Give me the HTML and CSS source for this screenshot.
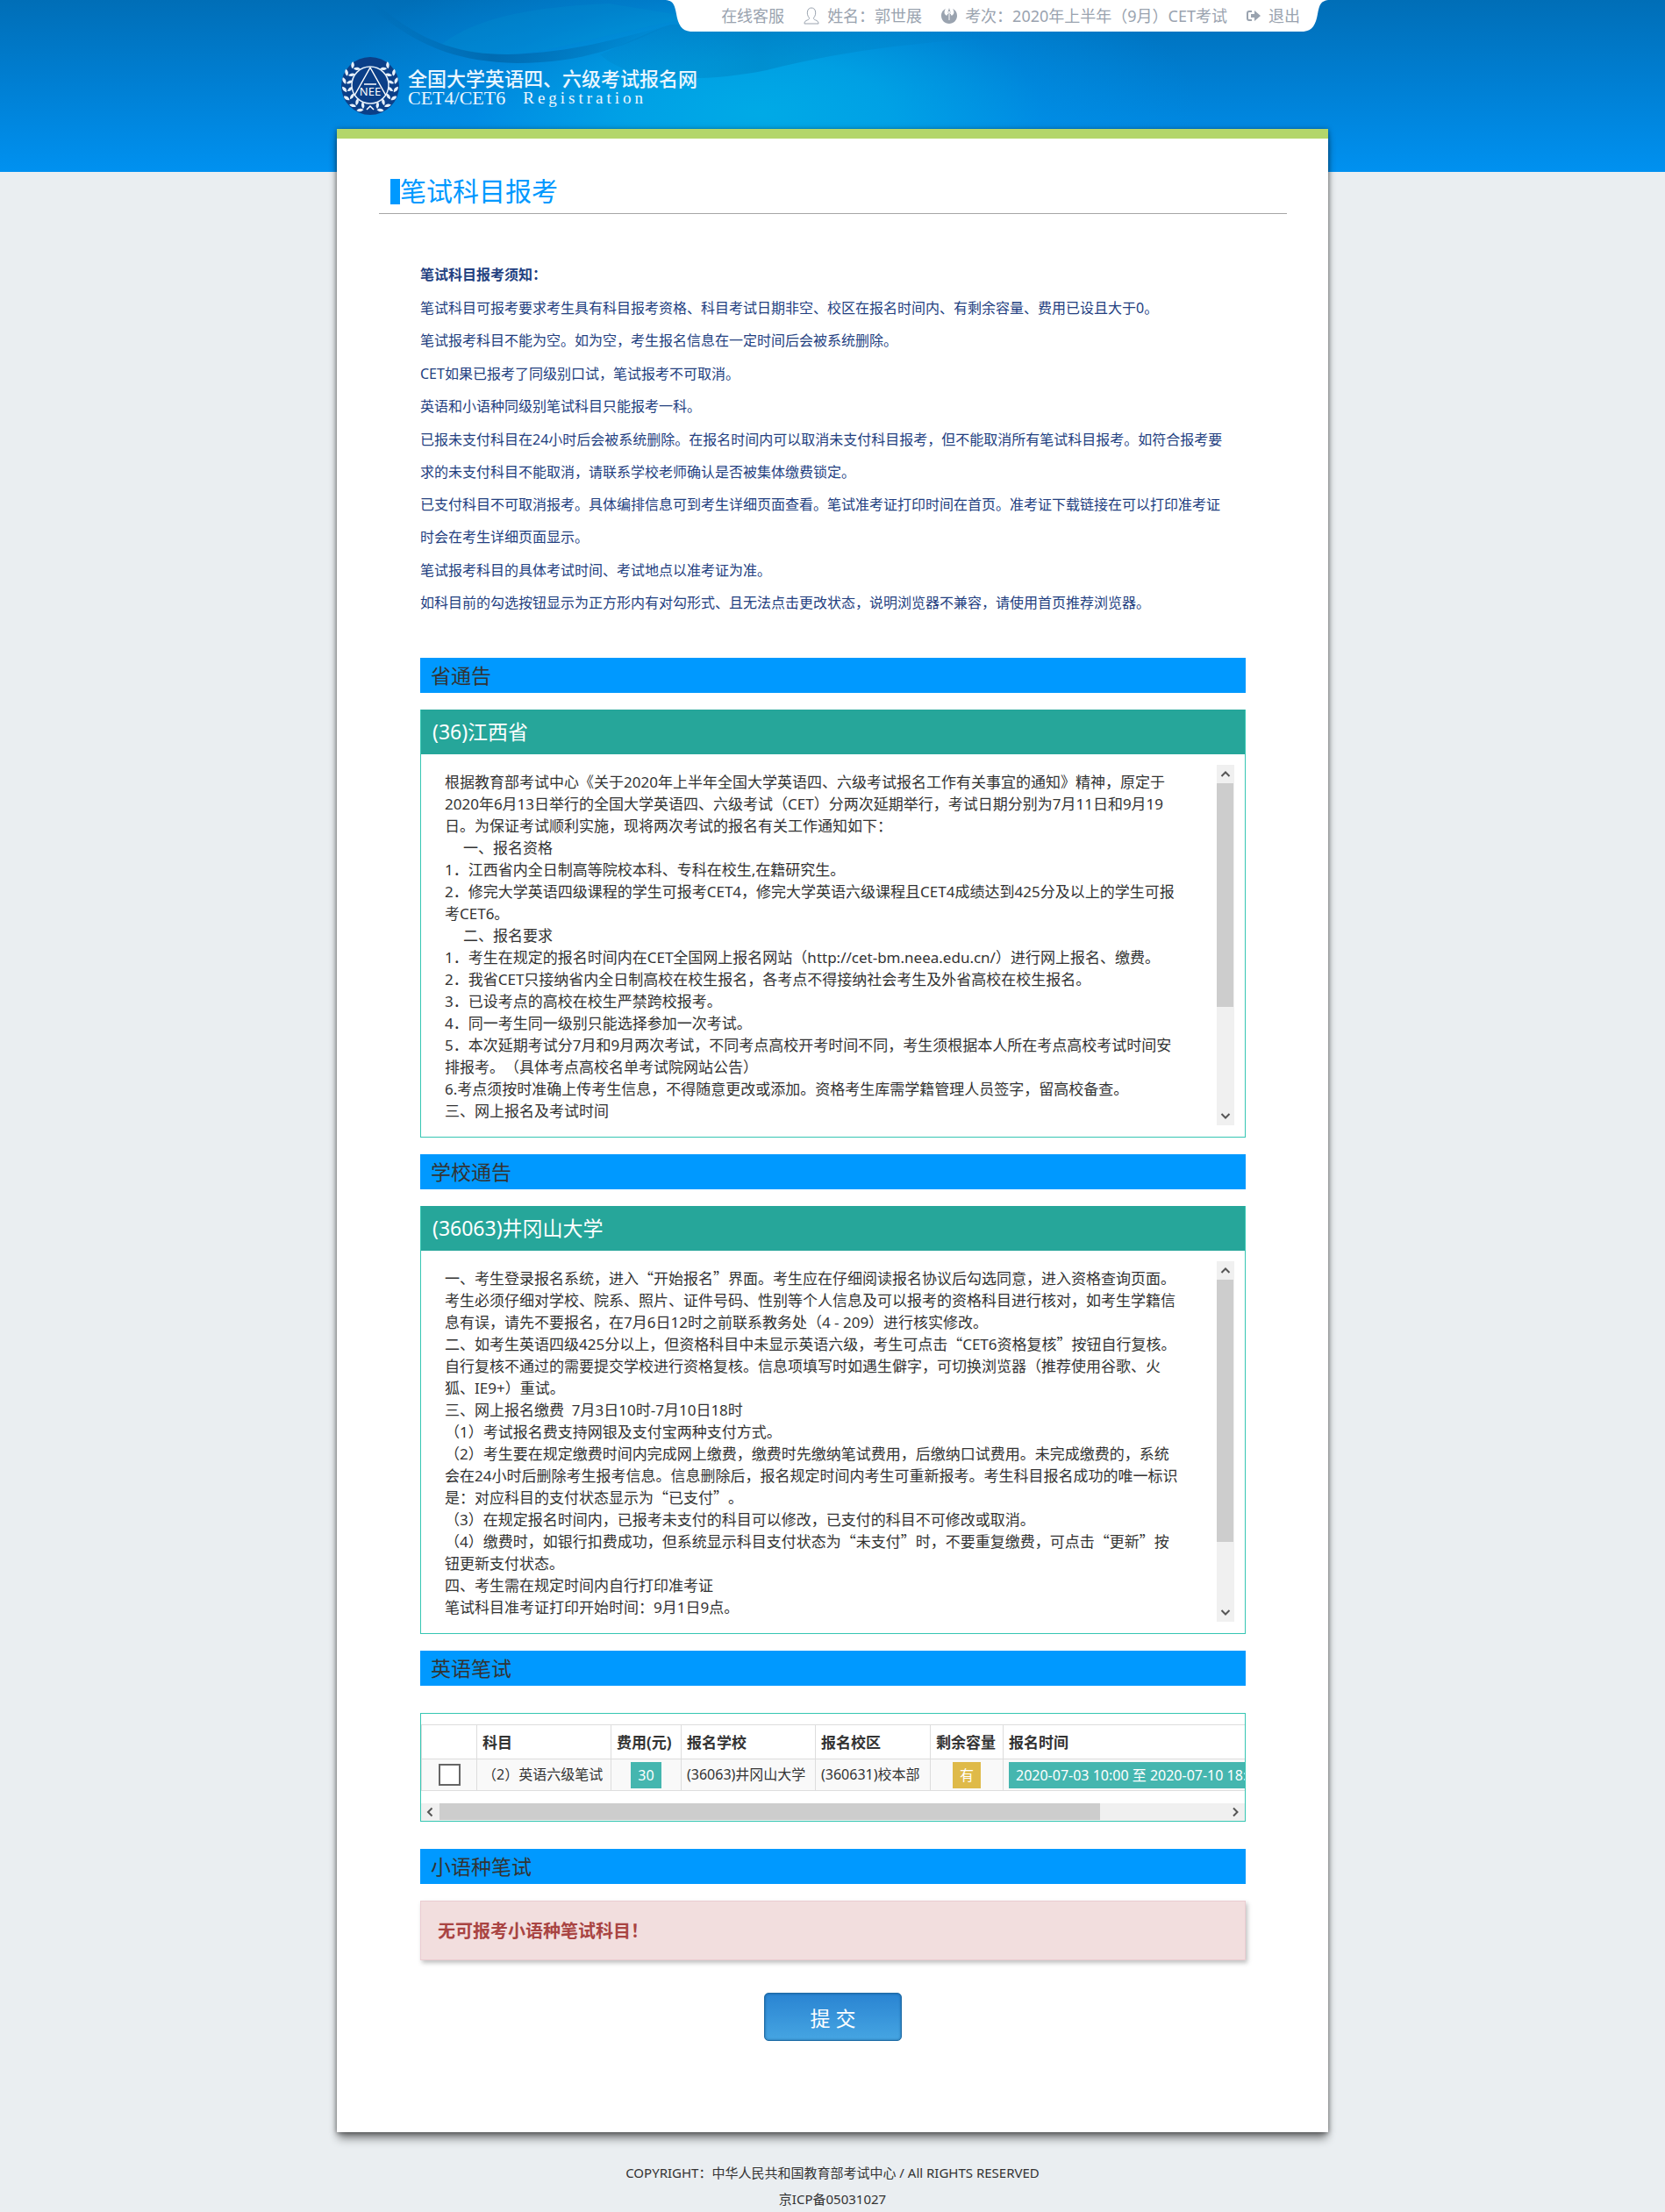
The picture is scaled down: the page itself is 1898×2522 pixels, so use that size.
FILE: index.html
```html
<!DOCTYPE html>
<html lang="zh-CN">
<head>
<meta charset="utf-8">
<meta name="viewport" content="width=device-width, initial-scale=1">
<title>笔试科目报考 - 全国大学英语四、六级考试报名网</title>
<link rel="stylesheet" href="styles.css">
</head>
<body>
<div class="page">
  <header class="site-header">
    <svg class="header-art" viewBox="0 0 1170 147" preserveAspectRatio="none" aria-hidden="true">
      <defs>
        <linearGradient id="swoosh" x1="0" x2="1"><stop offset="0" stop-color="#005f9f" stop-opacity="0"/><stop offset=".4" stop-color="#005f9f" stop-opacity=".65"/><stop offset="1" stop-color="#005f9f" stop-opacity="0"/></linearGradient>
        <linearGradient id="swoosh2" x1="0" x2="1"><stop offset="0" stop-color="#006aa8" stop-opacity=".1"/><stop offset=".4" stop-color="#006aa8" stop-opacity=".32"/><stop offset="1" stop-color="#006aa8" stop-opacity="0"/></linearGradient>
      </defs>
      <path d="M60 0C100 34 140 62 215 62C290 60 340 44 400 28C350 52 300 72 225 72C150 70 110 50 60 10Z" fill="url(#swoosh)"/>
      <path d="M140 50C180 20 240 8 330 4L430 20C330 36 260 62 215 62C180 62 160 58 140 50Z" fill="#0095cf" fill-opacity=".25"/>
      <path d="M320 62C350 92 430 96 510 80C590 60 660 50 760 44L780 20L400 28C370 38 350 50 320 62Z" fill="url(#swoosh2)"/>
    </svg>
    <nav class="user-bar" aria-label="用户菜单">
      <svg class="tab-edge" viewBox="0 0 28 36" aria-hidden="true"><path d="M0 0C8 1 10 5 12 16C14 28 18 35 28 36V0Z" fill="#fff"/></svg>
      <div class="user-menu">
        <a href="#">在线客服</a>
        <span class="menu-item"><svg width="18" height="20" viewBox="0 0 18 20" fill="none" stroke="#9aa3af" aria-hidden="true"><path d="M6.500 12.500C4.500 10 4 7.500 4.500 5C5 2 7 1 9 1C11 1 13 2 13.500 5C14 7.500 13.500 10 11.500 12.500C11.500 14.500 13 14.500 15 15.500C16.500 16.300 17 17.500 17 19H1C1 17.500 1.500 16.300 3 15.500C5 14.500 6.500 14.500 6.500 12.500Z"/></svg>姓名：郭世展</span>
        <span class="menu-item"><svg width="18" height="18" viewBox="0 0 18 18" aria-hidden="true"><path d="M5 1C1 3 0 6 0 9C0 14 4 18 9 18C14 18 18 14 18 9C18 6 17 3 13 1C15 4 15 7 12.500 8.500C11.500 9 10.800 8 10.800 6L9 0L7.200 6C7.200 8 6.500 9 5.500 8.500C3 7 3 4 5 1Z" fill="#9aa3af"/><path d="M9 4V14M7 7L9 4L11 7" stroke="#fff" fill="none"/></svg>考次：2020年上半年（9月）CET考试</span>
        <a href="#" class="menu-item"><svg width="16" height="14" viewBox="0 0 16 14" aria-hidden="true"><path d="M6 2H3Q1 2 1 4V10Q1 12 3 12H6" fill="none" stroke="#9aa3af" stroke-width="2"/><path d="M5 5H9V1L16 7L9 13V9H5Z" fill="#9aa3af"/></svg>退出</a>
      </div>
      <svg class="tab-edge" viewBox="0 0 28 36" aria-hidden="true"><path d="M28 0C20 1 18 5 16 16C14 28 10 35 0 36V0Z" fill="#fff"/></svg>
    </nav>
    <a class="brand" href="#">
      <svg class="brand-mark" viewBox="0 0 66 66" aria-hidden="true">
        <defs><g id="leaf" fill="#e6f0fa"><path d="M0 0C1 -3 4 -5 7 -4C6 -1 3 1 0 0Z"/><path d="M-1 1C-4 0 -6 -3 -5 -6C-2 -5 0 -3 -1 1Z"/></g></defs>
        <circle cx="33" cy="33" r="33" fill="#0b3f88"/>
        <g id="laurel">
          <use href="#leaf" transform="translate(25 59) rotate(-65)"/>
          <use href="#leaf" transform="translate(17 55) rotate(-45)"/>
          <use href="#leaf" transform="translate(10 48) rotate(-25)"/>
          <use href="#leaf" transform="translate(7 39) rotate(-8)"/>
          <use href="#leaf" transform="translate(6 30) rotate(8)"/>
          <use href="#leaf" transform="translate(8 21) rotate(20)"/>
          <use href="#leaf" transform="translate(14 13) rotate(35)"/>
        </g>
        <use href="#laurel" transform="translate(66 0) scale(-1 1)"/>
        <circle cx="33" cy="32" r="21" fill="#0b3f88" stroke="#e6f0fa" stroke-width="1.500"/>
        <path d="M33 12L15 44M33 12L51 44M26 31H40M29 60L33 56L37 60" fill="none" stroke="#fff" stroke-width="1.500"/>
        <text x="33" y="44" text-anchor="middle" class="brand-nee">NEE</text>
      </svg>
      <span class="brand-text">
        <span class="brand-name">全国大学英语四、六级考试报名网</span>
        <span class="brand-sub"><span>CET4/CET6</span><span class="brand-reg">Registration</span></span>
      </span>
    </a>
  </header>

  <main class="card">
    <h1 class="page-title">笔试科目报考</h1>
    <div class="content">
      <section class="notice">
        <p><b>笔试科目报考须知：</b></p>
        <p>笔试科目可报考要求考生具有科目报考资格、科目考试日期非空、校区在报名时间内、有剩余容量、费用已设且大于0。</p>
        <p>笔试报考科目不能为空。如为空，考生报名信息在一定时间后会被系统删除。</p>
        <p>CET如果已报考了同级别口试，笔试报考不可取消。</p>
        <p>英语和小语种同级别笔试科目只能报考一科。</p>
        <p>已报未支付科目在24小时后会被系统删除。在报名时间内可以取消未支付科目报考，但不能取消所有笔试科目报考。如符合报考要<br>求的未支付科目不能取消，请联系学校老师确认是否被集体缴费锁定。</p>
        <p>已支付科目不可取消报考。具体编排信息可到考生详细页面查看。笔试准考证打印时间在首页。准考证下载链接在可以打印准考证<br>时会在考生详细页面显示。</p>
        <p>笔试报考科目的具体考试时间、考试地点以准考证为准。</p>
        <p>如科目前的勾选按钮显示为正方形内有对勾形式、且无法点击更改状态，说明浏览器不兼容，请使用首页推荐浏览器。</p>
      </section>

      <h2 class="section-title">省通告</h2>
      <section class="panel">
        <h3 class="panel-title">(36)江西省</h3>
        <div class="scroll-area">
          <div class="bulletin">
            <p>根据教育部考试中心《关于2020年上半年全国大学英语四、六级考试报名工作有关事宜的通知》精神，原定于<br>2020年6月13日举行的全国大学英语四、六级考试（CET）分两次延期举行，考试日期分别为7月11日和9月19<br>日。为保证考试顺利实施，现将两次考试的报名有关工作通知如下：</p>
            <p class="indent">一、报名资格</p>
            <p>1．江西省内全日制高等院校本科、专科在校生,在籍研究生。</p>
            <p>2．修完大学英语四级课程的学生可报考CET4，修完大学英语六级课程且CET4成绩达到425分及以上的学生可报<br>考CET6。</p>
            <p class="indent">二、报名要求</p>
            <p>1．考生在规定的报名时间内在CET全国网上报名网站（http://cet-bm.neea.edu.cn/）进行网上报名、缴费。</p>
            <p>2．我省CET只接纳省内全日制高校在校生报名，各考点不得接纳社会考生及外省高校在校生报名。</p>
            <p>3．已设考点的高校在校生严禁跨校报考。</p>
            <p>4．同一考生同一级别只能选择参加一次考试。</p>
            <p>5．本次延期考试分7月和9月两次考试，不同考点高校开考时间不同，考生须根据本人所在考点高校考试时间安<br>排报考。（具体考点高校名单考试院网站公告）</p>
            <p>6.考点须按时准确上传考生信息，不得随意更改或添加。资格考生库需学籍管理人员签字，留高校备查。</p>
            <p>三、网上报名及考试时间</p>
          </div>
          <div class="scrollbar" aria-hidden="true">
            <svg viewBox="0 0 20 21"><path d="M5.500 13L10 8.500L14.500 13"/></svg>
            <div class="track"><div class="thumb" style="height:69%"></div></div>
            <svg viewBox="0 0 20 21"><path d="M5.500 8L10 12.500L14.500 8"/></svg>
          </div>
        </div>
      </section>

      <h2 class="section-title">学校通告</h2>
      <section class="panel">
        <h3 class="panel-title">(36063)井冈山大学</h3>
        <div class="scroll-area">
          <div class="bulletin">
            <p>一、考生登录报名系统，进入<span class="quote">“</span>开始报名<span class="quote">”</span>界面。考生应在仔细阅读报名协议后勾选同意，进入资格查询页面。<br>考生必须仔细对学校、院系、照片、证件号码、性别等个人信息及可以报考的资格科目进行核对，如考生学籍信<br>息有误，请先不要报名，在7月6日12时之前联系教务处（4 - 209）进行核实修改。</p>
            <p>二、如考生英语四级425分以上，但资格科目中未显示英语六级，考生可点击<span class="quote">“</span>CET6资格复核<span class="quote">”</span>按钮自行复核。<br>自行复核不通过的需要提交学校进行资格复核。信息项填写时如遇生僻字，可切换浏览器（推荐使用谷歌、火<br>狐、IE9+）重试。</p>
            <p>三、网上报名缴费&nbsp; 7月3日10时-7月10日18时</p>
            <p>（1）考试报名费支持网银及支付宝两种支付方式。</p>
            <p>（2）考生要在规定缴费时间内完成网上缴费，缴费时先缴纳笔试费用，后缴纳口试费用。未完成缴费的，系统<br>会在24小时后删除考生报考信息。信息删除后，报名规定时间内考生可重新报考。考生科目报名成功的唯一标识<br>是：对应科目的支付状态显示为<span class="quote">“</span>已支付<span class="quote">”</span>。</p>
            <p>（3）在规定报名时间内，已报考未支付的科目可以修改，已支付的科目不可修改或取消。</p>
            <p>（4）缴费时，如银行扣费成功，但系统显示科目支付状态为<span class="quote">“</span>未支付<span class="quote">”</span>时，不要重复缴费，可点击<span class="quote">“</span>更新<span class="quote">”</span>按<br>钮更新支付状态。</p>
            <p>四、考生需在规定时间内自行打印准考证</p>
            <p>笔试科目准考证打印开始时间：9月1日9点。</p>
          </div>
          <div class="scrollbar" aria-hidden="true">
            <svg viewBox="0 0 20 21"><path d="M5.500 13L10 8.500L14.500 13"/></svg>
            <div class="track"><div class="thumb" style="height:81%"></div></div>
            <svg viewBox="0 0 20 21"><path d="M5.500 8L10 12.500L14.500 8"/></svg>
          </div>
        </div>
      </section>

      <form action="#">
        <h2 class="section-title">英语笔试</h2>
        <div class="table-panel">
          <div class="table-view">
            <table class="subjects">
              <colgroup><col class="c-check"><col class="c-wide"><col class="c-fee"><col class="c-wide"><col class="c-campus"><col class="c-quota"><col></colgroup>
              <thead>
                <tr><th></th><th>科目</th><th>费用(元)</th><th>报名学校</th><th>报名校区</th><th>剩余容量</th><th>报名时间</th></tr>
              </thead>
              <tbody>
                <tr>
                  <td class="center"><input type="checkbox" id="subject-2" class="tick" aria-label="选择英语六级笔试"></td>
                  <td><label for="subject-2">（2）英语六级笔试</label></td>
                  <td class="center"><span class="badge">30</span></td>
                  <td>(36063)井冈山大学</td>
                  <td>(360631)校本部</td>
                  <td class="center"><span class="badge badge-warn">有</span></td>
                  <td><span class="badge">2020-07-03 10:00 至 2020-07-10 18:00</span></td>
                </tr>
              </tbody>
            </table>
          </div>
          <div class="scrollbar scrollbar-x" aria-hidden="true">
            <svg viewBox="0 0 21 20"><path d="M12.500 5.500L8 10L12.500 14.500"/></svg>
            <div class="track"><div class="thumb" style="width:84%"></div></div>
            <svg viewBox="0 0 21 20"><path d="M8 5.500L12.500 10L8 14.500"/></svg>
          </div>
        </div>

        <h2 class="section-title">小语种笔试</h2>
        <div class="alert" role="alert">无可报考小语种笔试科目！</div>
        <div class="actions"><button type="submit" class="submit">提 交</button></div>
      </form>
    </div>
  </main>

  <footer class="site-footer">
    <p>COPYRIGHT：中华人民共和国教育部考试中心 / All RIGHTS RESERVED</p>
    <p>京ICP备05031027</p>
  </footer>
</div>
</body>
</html>
```
FILE: styles.css
```css
* { box-sizing: border-box; }

body {
  margin: 0;
  color: #333;
  font: 16px/25px "Noto Sans", "Noto Sans CJK SC", sans-serif;
  text-spacing-trim: space-all;
  background: #eaeef1 linear-gradient(#006eb7, #0091f0) no-repeat 0 0 / 100% 196px;
}

p, h1, h2, h3 { margin: 0; font-weight: 400; }
a { color: inherit; text-decoration: none; }

.page { max-width: 1130px; margin: 0 auto; }

/* Header */
.site-header { position: relative; z-index: 0; padding-bottom: 16px; }
.site-header::before {
  content: "";
  position: absolute;
  z-index: -2;
  inset: 0 -40px -49px;
  background: radial-gradient(ellipse 500px 210px at 43% 66%, #00aae6 0, rgba(0, 168, 232, .8) 30%, rgba(0, 150, 236, .35) 65%, rgba(0, 145, 240, 0) 100%);
}
.header-art { position: absolute; z-index: -1; top: 0; left: -20px; width: calc(100% + 40px); height: 100%; }

.user-bar { display: flex; justify-content: flex-end; height: 36px; }
.tab-edge { width: 28px; height: 36px; flex: none; }
.user-menu {
  display: flex;
  align-items: center;
  gap: 22px;
  padding: 0 4px 0 35px;
  background: #fff;
  color: #9aa3af;
  font-size: 18px;
}
.menu-item { display: flex; align-items: center; gap: 9px; }

.brand { display: flex; gap: 10px; margin-top: 29px; padding-left: 5px; color: #eaf6ff; }
.brand-mark { width: 66px; height: 66px; flex: none; }
.brand-nee { fill: #fff; font: 13px "Noto Sans", sans-serif; }
.brand-text { display: flex; flex-direction: column; padding-top: 12px; }
.brand-name { font-size: 22px; line-height: 24px; font-weight: 500; }
.brand-sub { display: flex; gap: 20px; font: 22px/22px "Liberation Serif", serif; }
.brand-reg { font-size: 19px; letter-spacing: 4px; }

/* Card */
.card {
  position: relative;
  z-index: 1;
  padding-bottom: 104px;
  border-top: 11px solid #b3d66b;
  background: #fff;
  box-shadow: 0 1px 6px rgba(0, 0, 0, .5), 0 9px 10px -2px rgba(0, 0, 0, .45);
}
.page-title {
  display: flex;
  align-items: center;
  margin: 35px 47px 0 48px;
  padding-left: 13px;
  height: 51px;
  border-bottom: 1px solid #a6a6a6;
  color: #09f;
  font-size: 30px;
  line-height: 48px;
}
.page-title::before { content: ""; width: 11px; height: 29px; background: #09f; }
.content { padding: 51px 94px 0 95px; }

.notice { margin-bottom: 44px; color: #23407f; line-height: 37px; }
.notice p:nth-child(even) { padding-top: 1px; }

.section-title {
  height: 40px;
  margin-bottom: 19px;
  padding-left: 12px;
  background: #09f;
  font-size: 23px;
  line-height: 40px;
}

/* Bulletins */
.panel { margin-bottom: 19px; border: 1px solid #36c6b3; border-top: 0; }
.panel-title { padding-left: 13px; background: #26a69a; color: #fff; font-size: 23px; line-height: 51px; }
.scroll-area { display: flex; height: 436px; padding: 12px 12px 13px 27px; }
.bulletin { flex: 1; min-width: 0; padding-top: 7px; overflow: hidden; font-size: 17px; }
.indent { padding-left: 21px; }
.quote { font-family: "Noto Sans CJK SC", sans-serif; line-height: 1; }

.scrollbar { display: flex; flex-direction: column; width: 20px; background: #f0f0f0; }
.scrollbar svg { width: 20px; height: 21px; flex: none; fill: none; stroke: #555; stroke-width: 2; }
.track { flex: 1; }
.thumb { margin-right: 1px; background: #cdcdcd; }
.scrollbar-x { flex-direction: row; width: auto; height: 20px; }
.scrollbar-x svg { width: 21px; height: 20px; }
.scrollbar-x .thumb { height: 19px; margin: 0; }

/* Subject table */
.table-panel { margin: 31px 0; border: 1px solid #36c6b3; }
.table-view { padding: 12px 0 14px; overflow: hidden; }
.subjects { width: 1118px; border-collapse: collapse; table-layout: fixed; white-space: nowrap; }
.subjects th, .subjects td { padding: 0 0 0 6px; border: 1px solid #ddd; text-align: left; }
.subjects th { height: 39px; font-size: 17px; font-weight: 700; }
.subjects td { height: 36px; background: #f9f9f9; }
.subjects .center { padding: 0; text-align: center; }
.c-check { width: 63px; }
.c-wide { width: 153px; }
.c-fee { width: 80px; }
.c-campus { width: 131px; }
.c-quota { width: 83px; }
.tick {
  appearance: none;
  display: block;
  width: 25px;
  height: 25px;
  margin: 0 auto;
  border: 2px solid #666;
  background: #fff;
}
.tick:checked { background: #666; box-shadow: inset 0 0 0 4px #fff; }
.badge { display: inline-block; padding: 0 8px; background: #45b6af; color: #fff; line-height: 30px; vertical-align: middle; }
.badge-warn { background: #dfba49; }

.alert {
  padding: 2px 19px 0;
  border: 1px solid #ebccd1;
  background: #f2dede;
  box-shadow: 2px 3px 5px rgba(0, 0, 0, .25);
  color: #a94442;
  font-size: 20px;
  font-weight: 700;
  line-height: 64px;
}
.actions { margin-top: 37px; text-align: center; }
.submit {
  width: 157px;
  height: 55px;
  border: 1px solid #1f6ca6;
  border-radius: 5px;
  background: linear-gradient(#2a84d2, #45a5e2);
  box-shadow: inset 0 0 3px rgba(0, 60, 110, .6);
  color: #fff;
  font: 23px "Noto Sans", "Noto Sans CJK SC", sans-serif;
  vertical-align: top;
}

.site-footer { padding-top: 31px; text-align: center; font-size: 15px; line-height: 30px; }
```
